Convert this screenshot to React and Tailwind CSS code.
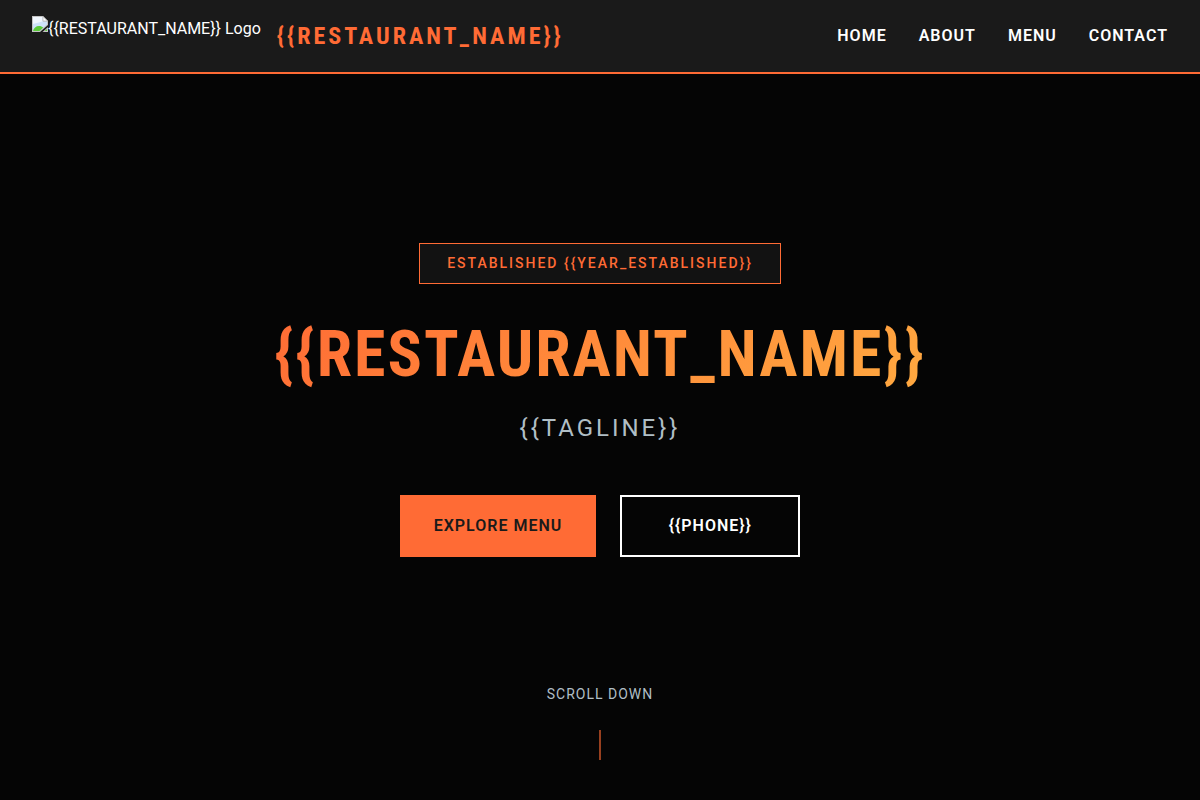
import React from "react";

const NAME = "{{RESTAURANT_NAME}}";
const LINKS = [
  ["Home", "#home"],
  ["About", "#about"],
  ["Menu", "#menu"],
  ["Contact", "#contact"],
];

function MissingImageIcon() {
  return (
    <svg className="size-4 shrink-0" viewBox="0 0 16 16" aria-hidden="true">
      <path d="M0 0h11l5 5v4L8 16H0z" fill="#c4c4c4" />
      <path d="M1 1h9.500v4.500H15v3L7.500 15H1z" fill="#cfe3fb" />
      <path d="M1 1h9.500v4.500L1 8z" fill="#f1f7ff" />
      <path d="M11 0.500l4.500 4.500H11z" fill="#ffffff" stroke="#b4b4b4" strokeWidth="0.7" />
      <path d="M1 15c0.500-3 3-5 6-5 1.800 0 3.200.6 4.200 1.500L7.500 15z" fill="#5ccb3b" />
      <path d="M16 11v5h-5.500z" fill="#c4c4c4" />
      <path d="M15 13v2h-2.200z" fill="#5ccb3b" />
    </svg>
  );
}

export default function App() {
  return (
    <div className="bg-[#050505] font-['Roboto',sans-serif] text-base leading-[26px] text-white">
      <header className="fixed inset-x-0 top-0 z-10 flex items-center justify-between border-b-2 border-[#ff6b35] bg-[#1a1a1a] px-8 py-4">
        <div className="flex items-center gap-4">
          <div className="flex h-10 items-start">
            <MissingImageIcon />
            <span>{NAME} Logo</span>
          </div>
          <span className="font-['Roboto_Condensed','Roboto',sans-serif] text-2xl font-bold tracking-[3px] text-[#ff6b35]">
            {NAME}
          </span>
        </div>
        <nav className="flex gap-8" aria-label="Main">
          {LINKS.map(([label, href]) => (
            <a key={href} href={href} className="font-semibold uppercase tracking-[1px]">
              {label}
            </a>
          ))}
        </nav>
      </header>

      <main id="home" className="grid min-h-screen grid-rows-[1fr_auto_1fr] justify-items-center text-center">
        <div className="row-start-2 flex flex-col items-center">
          <p className="border border-[#ff6b35] bg-[#121212] px-[27px] py-2 text-sm leading-[23px] font-medium uppercase tracking-[2px] text-[#ff6b35]">
            Established {"{{YEAR_ESTABLISHED}}"}
          </p>
          <h1 className="mt-8 bg-linear-135 from-[#ff6b35] to-[#ffa940] bg-clip-text font-['Roboto_Condensed','Roboto',sans-serif] text-[64px] leading-[77px] font-bold tracking-[2px] text-transparent">
            {NAME}
          </h1>
          <p className="mt-4 text-2xl leading-[38px] tracking-[3px] text-[#b0bec5]">{"{{TAGLINE}}"}</p>
          <div className="mt-12 flex gap-6">
            <a
              href="#menu"
              className="border-2 border-[#ff6b35] bg-[#ff6b35] px-8 py-4 leading-[26px] font-semibold uppercase tracking-[1px] text-[#1a1a1a]"
            >
              Explore Menu
            </a>
            <a
              href="#contact"
              className="min-w-[180px] border-2 border-white px-8 py-4 leading-[26px] font-semibold uppercase tracking-[1px]"
            >
              {"{{PHONE}}"}
            </a>
          </div>
        </div>
        <div className="row-start-3 flex flex-col items-center gap-6 self-end pb-10 text-sm leading-[23px] uppercase tracking-[1px] text-[#b0bec5]">
          <span>Scroll Down</span>
          <span className="h-[30px] w-0.5 bg-[#98401f]" />
        </div>
      </main>
    </div>
  );
}
